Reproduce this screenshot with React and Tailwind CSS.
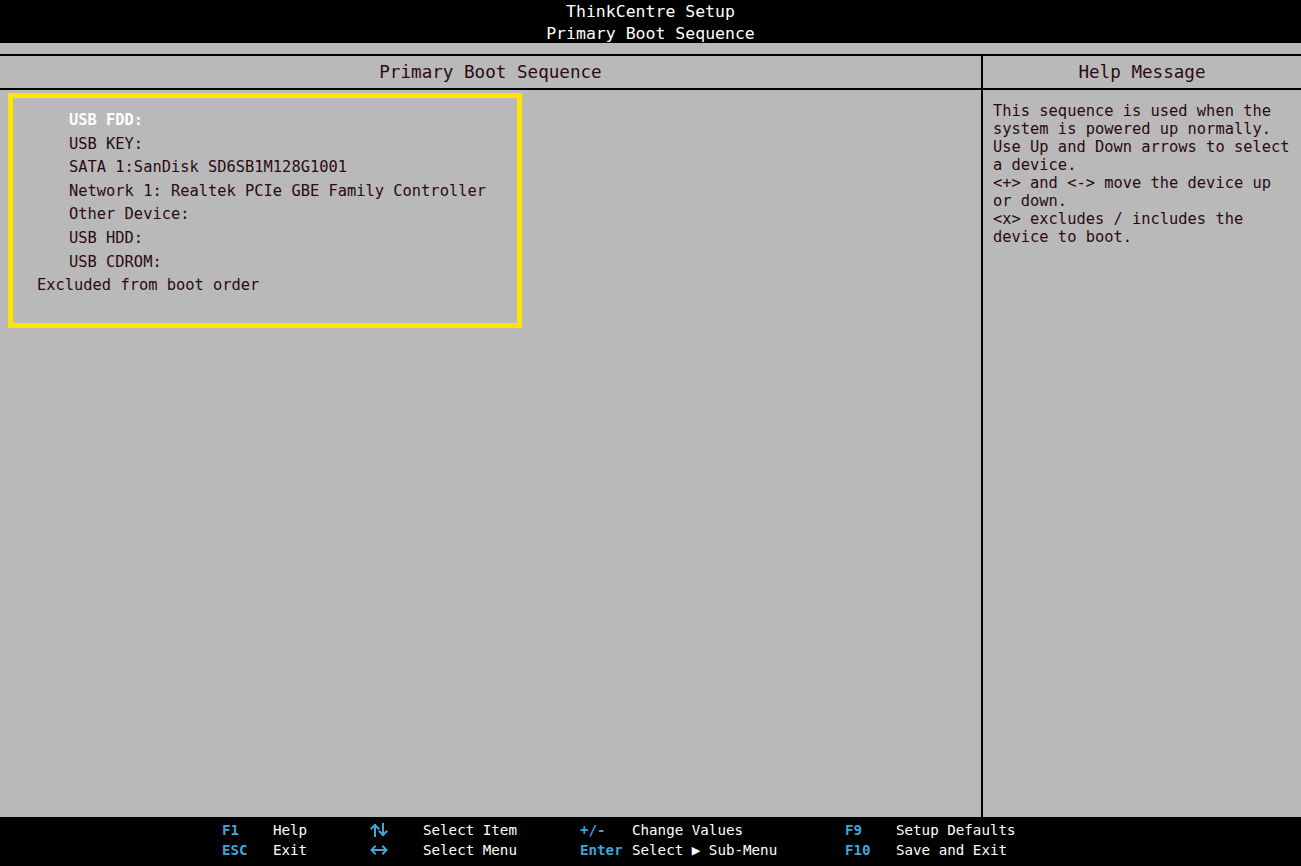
// App.jsx - ThinkCentre Setup / Primary Boot Sequence screen

const MONO = { fontFamily: '"DejaVu Sans Mono", "Liberation Mono", monospace' };

const BOOT_ITEMS = [
    'USB FDD:',
    'USB KEY:',
    'SATA 1:SanDisk SD6SB1M128G1001',
    'Network 1: Realtek PCIe GBE Family Controller',
    'Other Device:',
    'USB HDD:',
    'USB CDROM:',
];

const HELP_LINES = [
    'This sequence is used when the',
    'system is powered up normally.',
    'Use Up and Down arrows to select',
    'a device.',
    '<+> and <-> move the device up',
    'or down.',
    '<x> excludes / includes the',
    'device to boot.',
];

export default function App() {
    return (
        <div className="w-[1301px] h-[866px] flex flex-col bg-[#b9b9b9] overflow-hidden" style={MONO}>
            {/* Title bar */}
            <div className="h-[43px] bg-black text-white text-center text-[16.5px] leading-[22px] pt-[1px]">
                <div>ThinkCentre Setup</div>
                <div>Primary Boot Sequence</div>
            </div>

            <div className="h-[11px]" />

            {/* Panels */}
            <div className="flex-1 flex border-t-2 border-black text-[#2b0a12]">
                <div className="w-[981px] flex flex-col">
                    <div className="h-[34px] border-b-2 border-black flex items-center justify-center text-[17.6px]">
                        Primary Boot Sequence
                    </div>
                    <div className="flex-1 pl-[8px] pt-[3px]">
                        <div className="w-[514px] h-[235px] border-[5px] border-[#ffe400] pt-[11px] text-[15.4px] leading-[23.6px]">
                            {BOOT_ITEMS.map((item, i) => (
                                <div
                                    key={item}
                                    className={`pl-[56px] whitespace-pre ${i === 0 ? 'text-white font-bold' : ''}`}
                                >
                                    {item}
                                </div>
                            ))}
                            <div className="pl-[24px]">Excluded from boot order</div>
                        </div>
                    </div>
                </div>

                <div className="w-[2px] bg-black" />

                <div className="flex-1 flex flex-col">
                    <div className="h-[34px] border-b-2 border-black flex items-center justify-center text-[17.6px]">
                        Help Message
                    </div>
                    <div className="flex-1 pl-[10px] pt-[12px] text-[15.4px] leading-[18px]">
                        {HELP_LINES.map(line => (
                            <div key={line} className="whitespace-pre">{line}</div>
                        ))}
                    </div>
                </div>
            </div>

            {/* Key legend */}
            <div className="h-[49px] bg-black text-white text-[14.2px] leading-[20px] pt-[3px] pl-[222px]">
                <div className="flex">
                    <Key k="F1" w="w-[51px]" />
                    <Label t="Help" w="w-[97px]" />
                    <span className="w-[53px] shrink-0 flex items-center"><UpDownIcon /></span>
                    <Label t="Select Item" w="w-[157px]" />
                    <Key k="+/-" w="w-[52px]" />
                    <Label t="Change Values" w="w-[213px]" />
                    <Key k="F9" w="w-[51px]" />
                    <Label t="Setup Defaults" />
                </div>
                <div className="flex">
                    <Key k="ESC" w="w-[51px]" />
                    <Label t="Exit" w="w-[97px]" />
                    <span className="w-[53px] shrink-0 flex items-center"><LeftRightIcon /></span>
                    <Label t="Select Menu" w="w-[157px]" />
                    <Key k="Enter" w="w-[52px]" />
                    <Label t="Select ▶ Sub-Menu" w="w-[213px]" />
                    <Key k="F10" w="w-[51px]" />
                    <Label t="Save and Exit" />
                </div>
            </div>
        </div>
    );
}

const Key = ({ k, w }) => (
    <span className={`${w} shrink-0 whitespace-pre text-[#3fa6d6] font-bold`}>{k}</span>
);

const Label = ({ t, w = '' }) => (
    <span className={`${w} shrink-0 whitespace-pre`}>{t}</span>
);

// up arrow next to down arrow
const UpDownIcon = () => (
    <svg width="18" height="14" viewBox="0 0 18 14" fill="none" stroke="#3fa6d6" strokeWidth="2" strokeLinecap="square">
        <path d="M5 13V2M1.5 5.5L5 2l3.5 3.5" />
        <path d="M13 1v11M9.5 8.5L13 12l3.5-3.5" />
    </svg>
);

const LeftRightIcon = () => (
    <svg width="18" height="10" viewBox="0 0 18 10" fill="none" stroke="#3fa6d6" strokeWidth="2" strokeLinecap="square">
        <path d="M2 5h14M5 1.5L1.5 5 5 8.5M13 1.5L16.5 5 13 8.5" />
    </svg>
);
